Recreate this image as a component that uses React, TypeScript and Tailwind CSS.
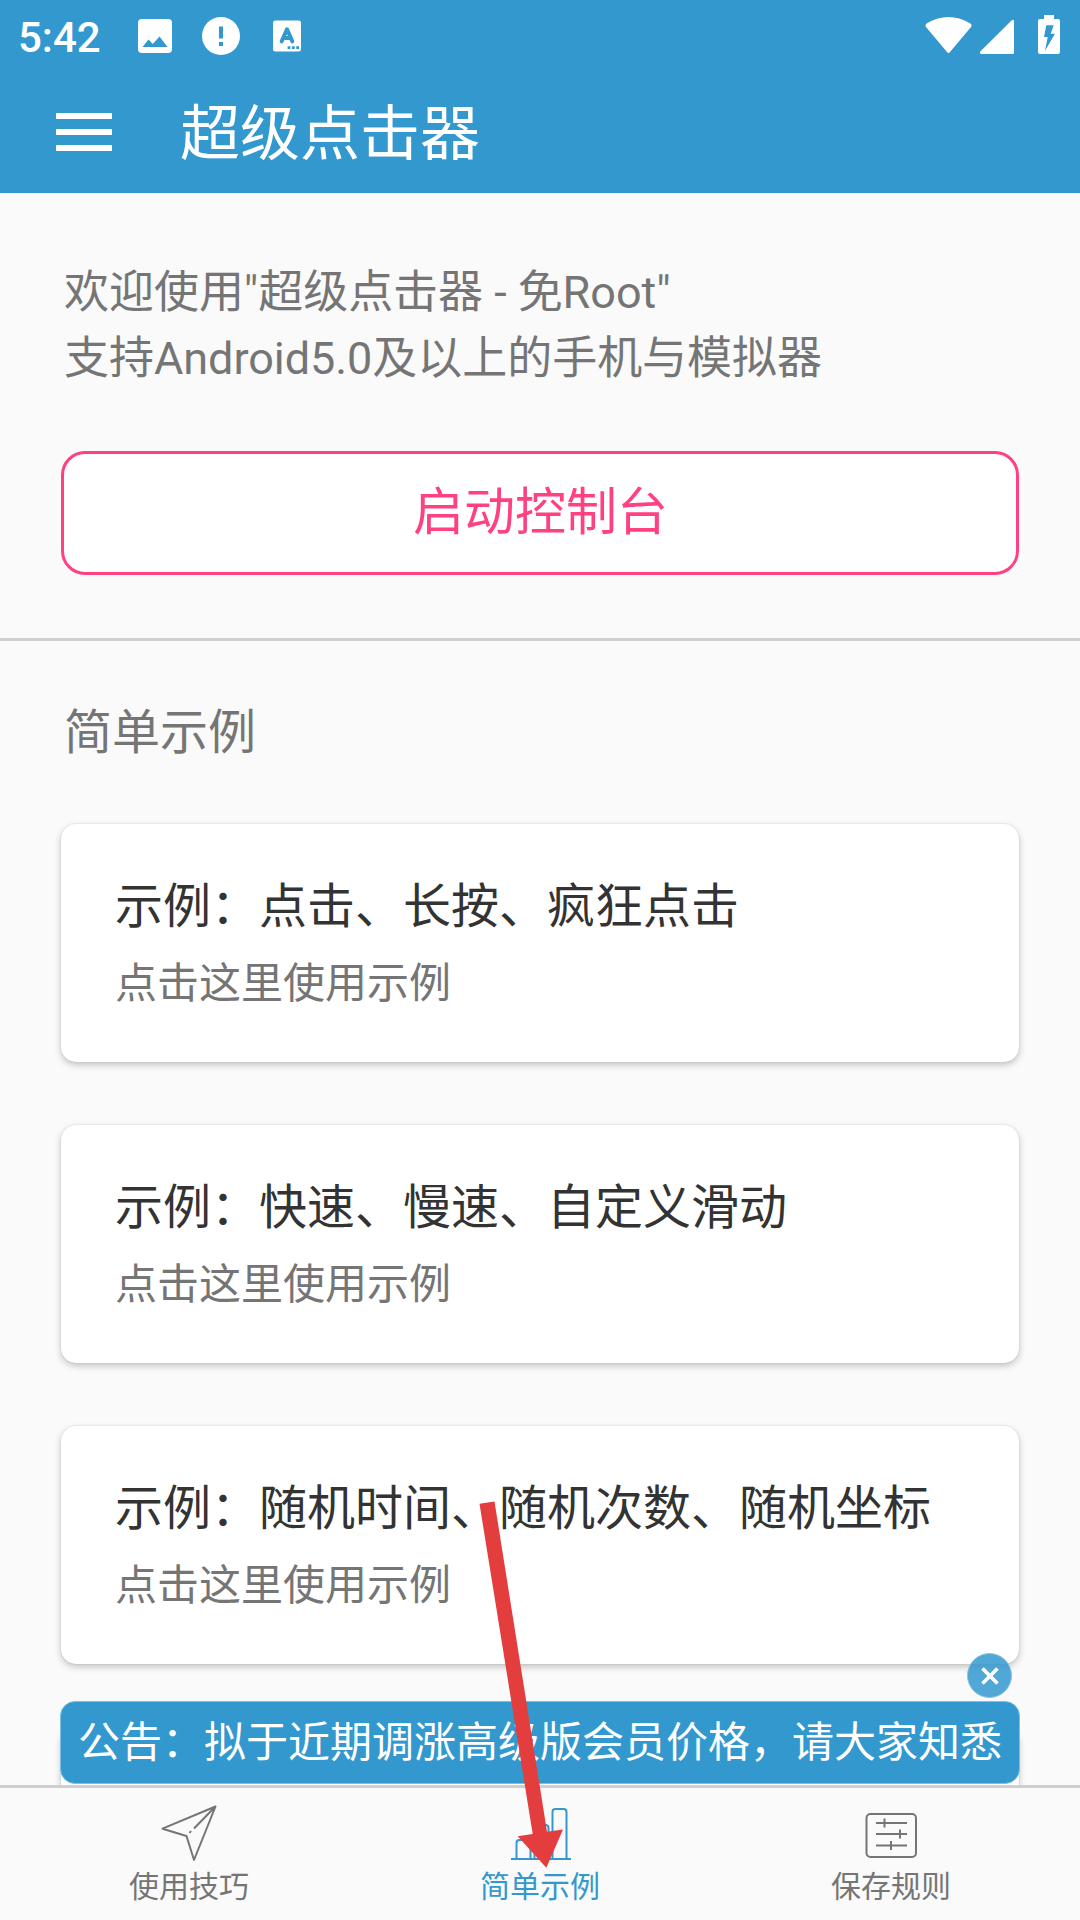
import type { ReactNode } from "react";

interface Example {
  title: string;
  hint: string;
}

const EXAMPLES: Example[] = [
  { title: "示例：点击、长按、疯狂点击", hint: "点击这里使用示例" },
  { title: "示例：快速、慢速、自定义滑动", hint: "点击这里使用示例" },
  { title: "示例：随机时间、随机次数、随机坐标", hint: "点击这里使用示例" },
];

function StatusBar() {
  return (
    <div className="flex h-[70px] items-start justify-between pl-[18px] pr-5">
      <div className="flex items-start">
        <span className="mt-[13px] w-[120px] text-[42px] leading-[50px] font-medium">5:42</span>
        <svg className="mt-[19px]" width="34" height="34" viewBox="0 0 34 34">
          <rect width="34" height="34" rx="4" fill="#fff" />
          <path d="M4.5 28 L10.5 20.5 L14.8 25 L21.5 17.5 L29.5 28 Z" fill="#3398ce" />
        </svg>
        <svg className="mt-[17px] ml-[30px]" width="38" height="38" viewBox="0 0 38 38">
          <circle cx="19" cy="19" r="19" fill="#fff" />
          <path d="M17 9.5h4v12h-4zM17 25h4v4h-4z" fill="#3398ce" />
        </svg>
        <svg className="mt-5 ml-[33px]" width="28" height="32" viewBox="0 0 28 32">
          <rect y="0.5" width="28" height="31" rx="2.5" fill="#fff" />
          <path
            d="M8.7 21.3 L14 9.3 L19.3 21.3 M10.5 18h7"
            fill="none"
            stroke="#3398ce"
            strokeWidth="4"
            strokeLinecap="round"
            strokeLinejoin="round"
          />
          <path d="M14.6 26.3h2.8v2.8h-2.8zM18.9 26.3h2.8v2.8h-2.8zM23.2 26.3H26v2.8h-2.8z" fill="#3398ce" />
        </svg>
      </div>
      <svg width="136" height="70" viewBox="924 0 136 70" fill="#fff">
        <path d="M926 27 Q924.5 25 927 23.2 Q948.5 11 970 23.2 Q972.5 25 971 27 L950 52 Q948.5 54 947 52 Z" />
        <path d="M981 54 Q979 53 980.5 51.3 L1011.8 20.3 Q1013.6 19 1014 21 V52.5 Q1014 54 1012.5 54 Z" />
        <path
          fillRule="evenodd"
          d="M1044 15h10v4h4q2 0 2 2v31q0 2-2 2h-18q-2 0-2-2V21q0-2 2-2h4z M1046.3 25.3L1044 37H1047.7L1045 50.7L1055 33.7H1050.7L1053.7 25.3z"
        />
      </svg>
    </div>
  );
}

function ExampleCard({ title, hint }: Example) {
  return (
    <div className="h-[238px] shrink-0 rounded-[15px] bg-white pt-12 pl-[54px] shadow-[0_3px_7px_rgba(0,0,0,0.22),0_0_2px_rgba(0,0,0,0.12)]">
      <h3 className="text-[48px] leading-[70px] text-[#333]">{title}</h3>
      <p className="mt-3 text-[42px] leading-[60px]">{hint}</p>
    </div>
  );
}

interface TabProps {
  label: string;
  active?: boolean;
  children: ReactNode;
}

function Tab({ label, active, children }: TabProps) {
  return (
    <div className={`flex w-[351px] flex-col items-center ${active ? "text-[#3398ce]" : "text-[#757575]"}`}>
      <svg
        className="mt-3"
        width="64"
        height="64"
        viewBox="0 0 64 64"
        fill="none"
        stroke="currentColor"
        strokeWidth="2"
        strokeLinejoin="round"
      >
        {children}
      </svg>
      <span className="mt-px text-[30px] leading-[44px]">{label}</span>
    </div>
  );
}

export default function App() {
  return (
    <div className="relative flex h-[1920px] w-[1080px] flex-col overflow-hidden bg-[#fafafa] font-[Roboto,'Noto_Sans_CJK_SC',sans-serif] text-[#757575]">
      <header className="h-[193px] shrink-0 bg-[#3398ce] text-white">
        <StatusBar />
        <div className="flex h-[123px] items-center pl-14">
          <div className="flex w-14 flex-col gap-2.5">
            <span className="h-1.5 bg-white" />
            <span className="h-1.5 bg-white" />
            <span className="h-1.5 bg-white" />
          </div>
          <h1 className="ml-[68px] pt-1.5 text-[60px] leading-[88px]">超级点击器</h1>
        </div>
      </header>

      <main className="flex min-h-0 flex-1 flex-col overflow-hidden">
        <section className="h-[448px] shrink-0 border-b-[3px] border-[#cfcfcf] px-[61px] pt-[67px]">
          <p className="pl-[3px] text-[45px] leading-[66px] tracking-[-0.04px]">
            欢迎使用"超级点击器 - 免Root"
            <br />
            支持Android5.0及以上的手机与模拟器
          </p>
          <button className="mt-[59px] block h-[124px] w-full rounded-[24px] border-[3px] border-[#ff4081] bg-white pb-0.5 pl-px text-[51px] leading-none text-[#ff4081]">
            启动控制台
          </button>
        </section>

        <section className="px-[61px] pt-[57px]">
          <h2 className="pl-[3px] text-[48px] leading-[70px]">简单示例</h2>
          <div className="mt-14 flex flex-col gap-[63px]">
            {EXAMPLES.map((example) => (
              <ExampleCard key={example.title} {...example} />
            ))}
            <ExampleCard title="" hint="" />
          </div>
        </section>
      </main>

      <nav className="flex h-[135px] shrink-0 justify-center border-t-[3px] border-[#cfcfcf] bg-[#fafafa]">
        <Tab label="使用技巧">
          <path d="M58.5 6.5 L5.5 28.7 L29.5 36 L37 60 Z M58.5 6.5 L37 28.5 M34 31 L32.5 33" />
        </Tab>
        <Tab label="简单示例" active>
          <path d="M3 59H63 M8.5 59V43q0-3 3-3h8q3 0 3 3V59 M26.5 59V28q0-3 3-3h8q3 0 3 3V59 M44.5 59V12q0-3 3-3h8q3 0 3 3V59" />
        </Tab>
        <Tab label="保存规则">
          <rect x="7.5" y="14" width="49.5" height="43" rx="4" />
          <path d="M17 23H48 M17 34H48 M17 45.5H48 M25.5 18.5V27.5 M41 29.5V38.5 M32 41V50" />
        </Tab>
      </nav>

      {/* Announcement */}
      <div className="absolute top-[1701px] left-[60px] flex h-[83px] w-[960px] items-center rounded-[15px] border border-[#7fbfe3] bg-[#3398ce] pl-[17px] text-[42px] leading-none whitespace-nowrap text-white">
        公告：拟于近期调涨高级版会员价格，请大家知悉
      </div>
      <button className="absolute top-[1653px] left-[967px] flex h-[45px] w-[45px] items-center justify-center rounded-full border border-[#8ac4e4] bg-[#3398ce]/85">
        <svg width="18" height="18" viewBox="0 0 18 18" stroke="#fff" strokeWidth="3.6">
          <path d="M1.5 1.5 L16.5 16.5 M16.5 1.5 L1.5 16.5" />
        </svg>
      </button>

      {/* Pointer arrow */}
      <svg className="absolute top-[1495px] left-[470px]" width="100" height="380" viewBox="470 1495 100 380">
        <path
          d="M479.5 1503.7 L494.5 1501.5 L547 1831.7 L563 1829.5 L546.3 1867.7 L517.7 1836.3 L532.7 1834 Z"
          fill="#e33d3d"
        />
      </svg>
    </div>
  );
}
